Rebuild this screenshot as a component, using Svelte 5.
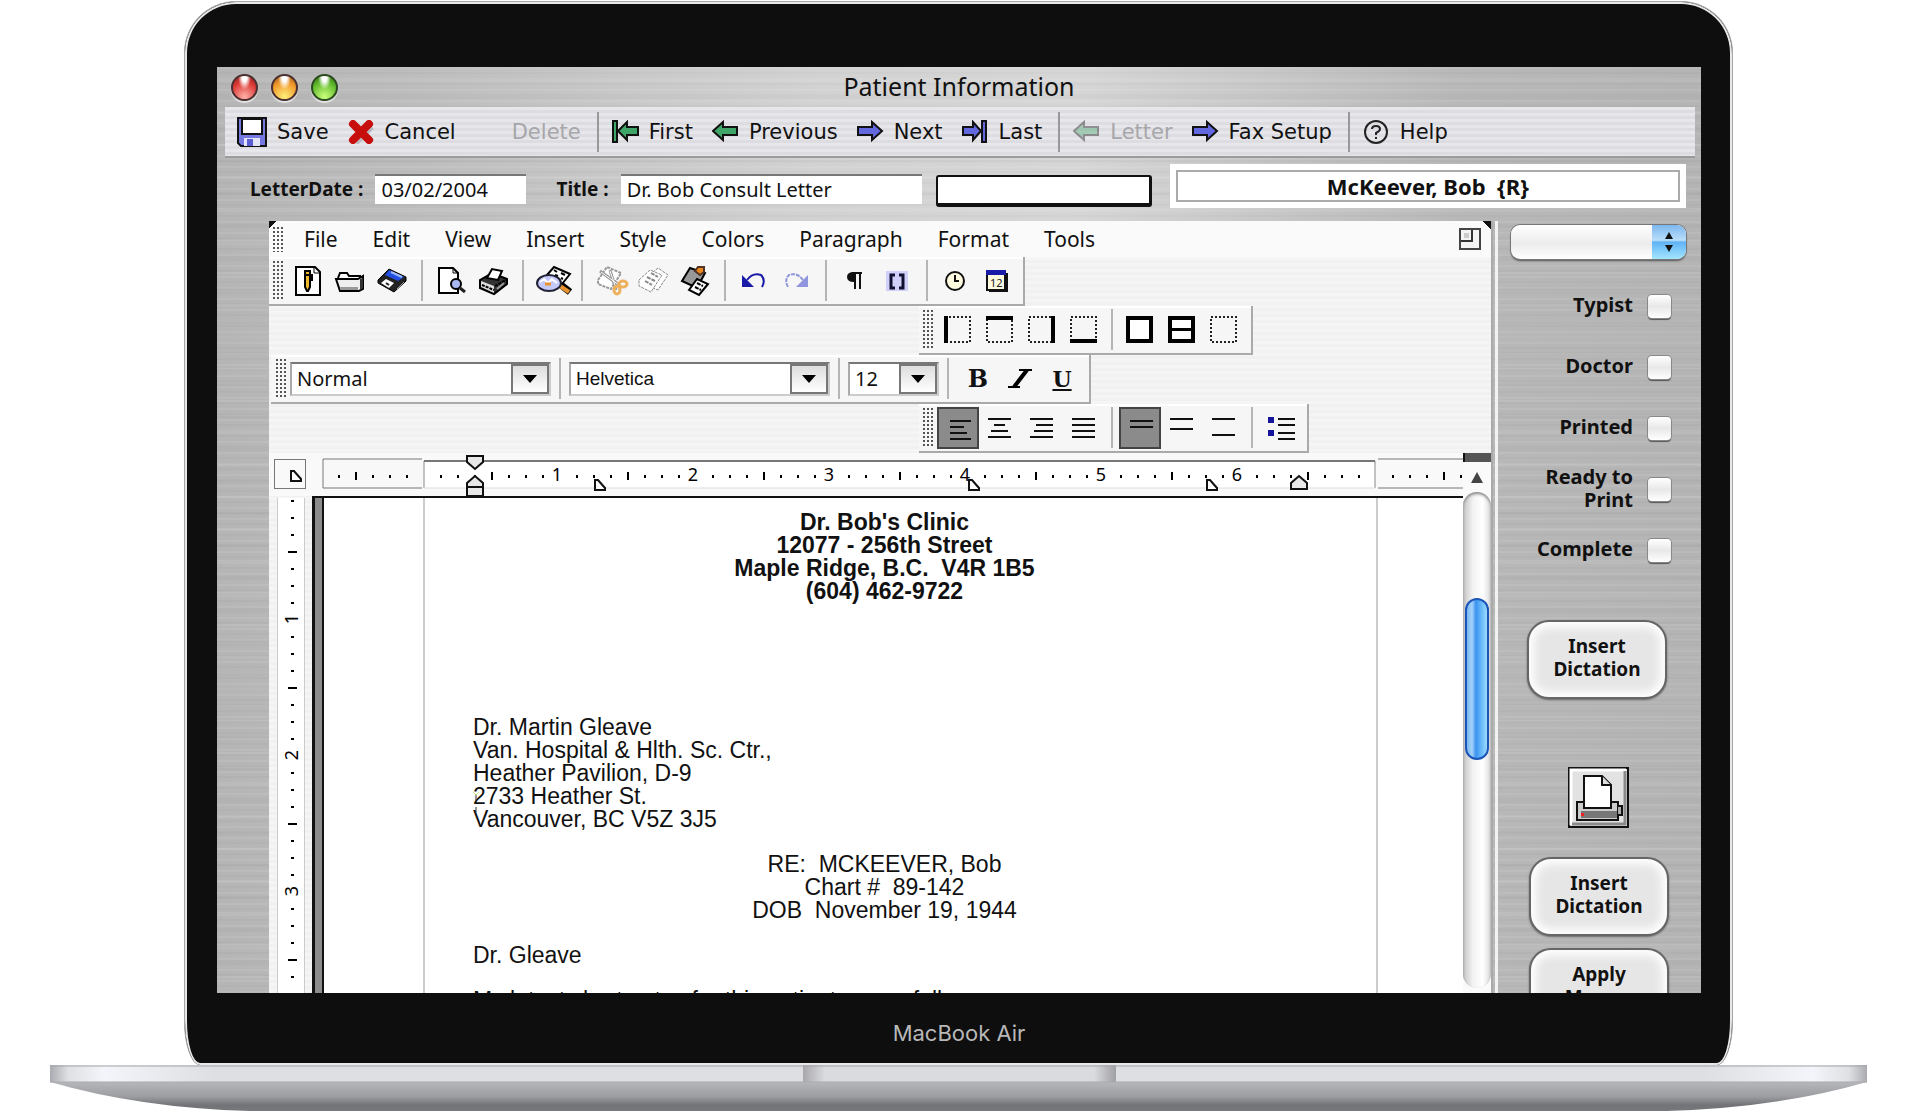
<script>
  const arrow = "M1 11 L11 2 V7 H25 V15 H11 V20 Z";
  const actions = [
    { name: "Save", icon: "save" },
    { name: "Cancel", icon: "cancel" },
    { name: "Delete", icon: "", disabled: true },
    { sep: true },
    { name: "First", icon: "first" },
    { name: "Previous", icon: "left" },
    { name: "Next", icon: "right" },
    { name: "Last", icon: "last" },
    { sep: true },
    { name: "Letter", icon: "left", disabled: true },
    { name: "Fax Setup", icon: "right" },
    { sep: true },
    { name: "Help", icon: "help" },
  ];
  const menus = ["File", "Edit", "View", "Insert", "Style", "Colors", "Paragraph", "Format", "Tools"];

  // "|" marks a separator between groups
  const fileTools = ["new", "open", "disk", "|", "preview", "print", "|", "find", "|", "cut", "copy", "paste", "|", "undo", "redo", "|", "pilcrow", "brackets", "|", "clock", "calendar"];
  const borderTools = ["edgeL", "edgeT", "edgeR", "edgeB", "|", "box", "boxH", "boxNone"];
  const alignTools = ["alignL", "alignC", "alignR", "alignJ", "|", "space1", "space15", "space2", "|", "list"];

  const dots = '<rect x="2" y="2" width="25" height="25" fill="none" stroke="#222" stroke-width="2" stroke-dasharray="2 2"/>';
  const bars = (rows) =>
    rows.map(([x, y, w]) => `<rect x="${x}" y="${y}" width="${w}" height="2" fill="#111"/>`).join("");

  const icons = {
    new: '<path d="M3 1H22L27 6V29H3Z" fill="#fff" stroke="#000" stroke-width="2"/><path d="M21 1V7H27" fill="none" stroke="#000"/><path d="M12 5H17V21L15 25H14L12 21Z" fill="#f0b92c" stroke="#000" stroke-width="2"/><path d="M12 9H19V15" fill="none" stroke="#000" stroke-width="2"/>',
    open: '<path d="M3 12L5 7H12L14 10H25V13" fill="#fff" stroke="#000" stroke-width="2"/><path d="M1 13H23L28 10V23L24 25H5Z" fill="#eee" stroke="#000" stroke-width="2"/><path d="M5 21H23V24H6Z" fill="#999"/><path d="M25 13V24L28 22V12Z" fill="#333"/>',
    disk: '<path d="M12 3L29 11V15L17 26L1 17V14Z" fill="#222" stroke="#000"/><path d="M12 4L27 11L21 15L8 9Z" fill="#244ee0"/><path d="M14 6L25 11" stroke="#9cbcff" stroke-width="2"/><path d="M9 13L17 17L12 22L4 17Z" fill="#fff"/><path d="M9 17L12 19" stroke="#222" stroke-width="2"/><path d="M20 23L27 16" stroke="#999"/>',
    preview: '<path d="M3 2H17L22 7V27H3Z" fill="#fff" stroke="#000" stroke-width="2"/><path d="M17 2V7H22" fill="none" stroke="#000"/><circle cx="20" cy="18" r="5" fill="#a9b8f5" stroke="#000" stroke-width="2"/><path d="M24 22L29 26" stroke="#222" stroke-width="3"/>',
    print: '<path d="M2 14L14 7L29 13V18L16 28L2 22Z" fill="#333" stroke="#000" stroke-width="2"/><path d="M9 12L14 3L24 5L20 14Z" fill="#fff" stroke="#000" stroke-width="2"/><path d="M3 15L16 20V27L3 21Z" fill="#ddd"/><path d="M4 19L16 24M17 20L28 14" stroke="#000" stroke-width="2" stroke-dasharray="3 1"/><path d="M19 23L26 17" stroke="#999" stroke-width="2"/>',
    find: '<path d="M10 9L17 1L33 8L25 18Z" fill="#fff" stroke="#000" stroke-width="2"/><path d="M17 4L20 6M24 7L28 9M18 9L21 10M24 12L26 13" stroke="#000" stroke-width="2"/><path d="M24 19L33 26" stroke="#000" stroke-width="7"/><path d="M23 20L32 26" stroke="#e8932d" stroke-width="4"/><ellipse cx="12" cy="17" rx="12" ry="8" fill="#c5c9fa" stroke="#223" stroke-width="2"/><path d="M3 16L7 13L11 17L15 13L20 17" fill="none" stroke="#fff" stroke-width="2"/><path d="M8 18H14" stroke="#e8932d" stroke-width="3"/>',
    cut: '<path d="M2 14L11 1L25 7L15 23L2 18Z" fill="#fff" stroke="#999" stroke-width="2" stroke-dasharray="3 1"/><path d="M4 5L24 20M14 4L20 24" stroke="#999" stroke-width="3"/><path d="M5 6L23 19M14 5L20 22" stroke="#fff"/><g fill="none" stroke="#edb15d" stroke-width="3"><ellipse cx="21" cy="24" rx="3" ry="4"/><ellipse cx="27" cy="18" rx="4" ry="3"/></g>',
    copy: '<g fill="#fff" stroke="#888" stroke-width="1" stroke-dasharray="3 1"><path d="M12 9L20 2L30 9L20 24L8 19Z"/><path d="M1 14L12 4L24 9L13 26L1 20Z"/></g><path d="M9 11L17 15M7 15L14 19M13 7L20 11" stroke="#888" stroke-width="2" stroke-dasharray="4 1"/>',
    paste: '<path d="M2 15L10 2L25 7L17 22Z" fill="#999" stroke="#000" stroke-width="2"/><path d="M15 5L18 1H24V6L20 9Z" fill="#e88a20" stroke="#532" stroke-width="2"/><path d="M9 24L17 13L28 18L19 29Z" fill="#fff" stroke="#000" stroke-width="2"/><path d="M17 17L23 20M15 21L21 24" stroke="#000" stroke-width="2" stroke-dasharray="4 1"/>',
    undo: '<path d="M8 14Q14 6 22 9Q27 14 23 21" fill="none" stroke="#1a1aa8" stroke-width="2"/><path d="M3 9V21H15Z" fill="#1a1aa8"/>',
    redo: '<path d="M22 14Q16 6 8 9Q3 14 7 21" fill="none" stroke="#8f96dd" stroke-width="2" stroke-dasharray="4 1"/><path d="M27 9V21H15Z" fill="#8f96dd"/>',
    pilcrow: '<path d="M22 7H12M15 7V23M20 7V23" fill="none" stroke="#111" stroke-width="2"/><path d="M14 6Q7 6 7 11Q7 16 14 16Z" fill="#111"/>',
    brackets: '<rect x="4" y="5" width="22" height="20" fill="#d0d0fb"/><path d="M13 9H9V22H13M17 9H21V22H17" fill="none" stroke="#101030" stroke-width="3"/>',
    clock: '<circle cx="14" cy="15" r="9" fill="#fffbe0" stroke="#111" stroke-width="2"/><path d="M14 9V15H18" fill="none" stroke="#111" stroke-width="2"/>',
    calendar: '<rect x="6" y="7" width="19" height="19" fill="#111"/><rect x="4" y="5" width="18" height="19" fill="#fffbe0" stroke="#111" stroke-width="2"/><rect x="3" y="4" width="20" height="5" fill="#1a1aa8"/><text x="7" y="21" font-size="11" font-family="Noto Sans, sans-serif" fill="#222">12</text>',
    edgeL: dots + '<rect x="1" y="1" width="4" height="27"/>',
    edgeT: dots + '<rect x="1" y="1" width="27" height="4"/>',
    edgeR: dots + '<rect x="24" y="1" width="4" height="27"/>',
    edgeB: dots + '<rect x="1" y="24" width="27" height="4"/>',
    box: '<rect x="3" y="3" width="23" height="23" fill="#fff" stroke="#000" stroke-width="4"/>',
    boxH: '<rect x="3" y="3" width="23" height="23" fill="#fff" stroke="#000" stroke-width="4"/><rect x="3" y="13" width="23" height="3"/>',
    boxNone: dots,
    alignL: bars([[7, 7, 21], [7, 13, 14], [7, 19, 17], [7, 25, 21]]),
    alignC: bars([[3, 5, 23], [9, 11, 11], [6, 17, 17], [3, 23, 23]]),
    alignR: bars([[3, 5, 23], [9, 11, 17], [7, 17, 19], [3, 23, 23]]),
    alignJ: bars([[3, 5, 23], [3, 11, 23], [3, 17, 23], [3, 23, 23]]),
    space1: bars([[5, 7, 23], [5, 13, 23]]),
    space15: bars([[3, 5, 23], [3, 15, 23]]),
    space2: bars([[3, 5, 23], [3, 21, 23]]),
    list: bars([[13, 5, 17], [13, 11, 17], [13, 19, 17], [13, 25, 17]]) + '<path d="M3 4H9V10H3ZM3 17H9V23H3Z" fill="#15159c"/>',
  };

  // ruler marks, one every 1/8 inch
  const marks = [];
  for (let i = -5; i <= 61; i++) marks.push(i);
  const onRuler = marks.filter((i) => i !== 0 && i !== 56);
  const vmarks = [];
  for (let i = 1; i <= 30; i++) vmarks.push(i);

  const flags = ["Typist", "Doctor", "Printed", "Ready to Print", "Complete"];

  let active = $state({ alignL: true, space1: true });
  let letterDate = $state("03/02/2004");
  let title = $state("Dr. Bob Consult Letter");
</script>

{#snippet tools(list)}
  {#each list as t}
    {#if t === "|"}
      <span class="sep"></span>
    {:else}
      <button class="tool" class:on={active[t]} aria-label={t}>
        <svg width="30" height="30" viewBox="0 0 30 30">{@html icons[t]}</svg>
      </button>
    {/if}
  {/each}
{/snippet}

{#snippet combo(id, value, cls)}
  <div class="combo {cls}">
    <select {id} aria-label={id}><option>{value}</option></select>
    <span class="drop"><svg width="16" height="9"><path d="M1 1H15L8 9Z" /></svg></span>
  </div>
{/snippet}

<div class="laptop">
  <div class="lid">
    <div class="screen">
      <header class="titlebar">
        <div class="lights">
          <span class="light red"></span>
          <span class="light amber"></span>
          <span class="light green"></span>
        </div>
        <h1>Patient Information</h1>
      </header>

      <nav class="actions">
        {#each actions as a}
          {#if a.sep}
            <span class="line"></span>
          {:else}
            <button disabled={a.disabled}>
              {#if a.icon === "save"}
                <svg width="30" height="30" viewBox="0 0 30 30"><path d="M1 1H29V29H4L1 26Z" fill="#7478e0" stroke="#111" stroke-width="2" /><rect x="5" y="2" width="20" height="15" fill="#fff" stroke="#111" stroke-width="2" /><rect x="7" y="21" width="16" height="8" fill="#e4e4f8" /><rect x="10" y="22" width="6" height="7" fill="#5a5ed0" /></svg>
              {:else}
                <svg width="27" height="24" viewBox="0 0 27 24">
                  {#if a.icon === "cancel"}
                    <path d="M5 4L21 20M21 4L5 20" stroke="#b9b9c0" stroke-width="8" transform="translate(2 2)" />
                    <path d="M5 4L21 20M21 4L5 20" stroke="#c80d0d" stroke-width="8" stroke-linecap="round" />
                  {:else if a.icon === "left"}
                    <path d={arrow} class="go-left" />
                  {:else if a.icon === "right"}
                    <path d={arrow} class="go-right" transform="matrix(-1 0 0 1 26 0)" />
                  {:else if a.icon === "first"}
                    <rect x="1" y="1" width="4" height="21" class="go-left" />
                    <path d="M6 11L15 2V7H26V15H15V20Z" class="go-left" />
                  {:else if a.icon === "last"}
                    <path d="M19 11L11 2V7H1V15H11V20Z" class="go-right" />
                    <rect x="20" y="1" width="4" height="21" class="go-right" />
                  {:else if a.icon === "help"}
                    <circle cx="13" cy="12" r="11" fill="none" stroke="#222" stroke-width="2" />
                    <path d="M9 9Q9 6 13 6Q17 6 17 9Q17 11 13 13V15M13 17V19" fill="none" stroke="#222" stroke-width="2" />
                  {/if}
                </svg>
              {/if}
              {a.name}
            </button>
          {/if}
        {/each}
      </nav>

      <form class="fields">
        <label for="date">LetterDate :</label>
        <input id="date" class="date" bind:value={letterDate} />
        <label for="title">Title :</label>
        <input id="title" class="title" bind:value={title} />
        <input class="blank" aria-label="Status" />
        <output class="patient">McKeever, Bob&nbsp; {"{R}"}</output>
      </form>

      <div class="work">
        <main class="editor">
          <div class="menubar">
            <span class="grip"></span>
            {#each menus as m}
              <button>{m}</button>
            {/each}
            <svg class="zoombox" width="22" height="22" viewBox="0 0 22 22"><rect x="1" y="1" width="20" height="20" fill="#f4f4f4" stroke="#444" stroke-width="2" /><path d="M2 13H13V2" fill="none" stroke="#333" stroke-width="2" /><rect x="5" y="5" width="5" height="5" fill="#ccc" /></svg>
            <span class="corner left"></span>
            <span class="corner right"></span>
          </div>

          <div class="bar main"><span class="grip"></span>{@render tools(fileTools)}</div>
          <div class="bar shifted"><span class="grip"></span>{@render tools(borderTools)}</div>
          <div class="bar format">
            <span class="grip"></span>
            {@render combo("Style", "Normal", "wide")}
            <span class="sep"></span>
            {@render combo("Font", "Helvetica", "wide font")}
            <span class="sep"></span>
            {@render combo("Size", "12", "small")}
            <span class="sep"></span>
            <button class="tool b">B</button>
            <button class="tool i" aria-label="Italic"><svg width="30" height="30" viewBox="0 0 30 30"><path d="M14 6H27M3 23H15" stroke="#000" stroke-width="2" /><path d="M22 6L9 23" stroke="#000" stroke-width="4" /></svg></button>
            <button class="tool u">U</button>
          </div>
          <div class="bar shifted"><span class="grip"></span>{@render tools(alignTools)}</div>

          <div class="lower">
            <div class="pane">
              <div class="ruler">
                <span class="tabbox"><svg width="12" height="12"><path d="M1 1V11H11V9L4 1Z" fill="#fff" stroke="#111" stroke-width="2" /></svg></span>
                <svg class="scale" height="44">
                  <path d="M100 6H1V35H100" fill="#f8f8f8" stroke="#777" />
                  <rect x="102" y="8" width="951" height="27" fill="#fff" />
                  <path d="M102 35V8H1053V35" fill="none" stroke="#888" />
                  <path d="M102 8H1053" stroke="#777" stroke-width="2" />
                  <path d="M102 35H1053" stroke="#ddd" />
                  <path d="M1056 6H1160M1056 35H1160" stroke="#777" />
                  {#each onRuler as i}
                    {#if i > 0 && i % 8 === 0}
                      <text x={99 + i * 17} y="28">{i / 8}</text>
                    {:else if i % 4 === 0}
                      <rect x={101 + i * 17} y="19" width="2" height="8" />
                    {:else}
                      <rect x={101 + i * 17} y="22" width="2" height="3" />
                    {/if}
                  {/each}
                  <g fill="#e8e8e8" stroke="#111" stroke-width="2">
                    <path d="M145 3H161V9L153 16L145 9Z" />
                    <path d="M145 43V30L153 23L161 30V43ZM145 34H161" />
                    <path d="M969 36V30L977 23L985 30V36Z" />
                    <path fill="#fff" d="M273 27V37H283V35L276 27ZM647 27V37H657V35L650 27ZM885 27V37H895V35L888 27Z" />
                  </g>
                </svg>
              </div>
              <div class="docrow">
                <svg class="vscale" width="28">
                  {#each vmarks as i}
                    {#if i % 8 === 0}
                      <text x="0" y="0" transform="translate(20 {i * 17 - 15}) rotate(-90)">{i / 8}</text>
                    {:else if i % 4 === 0}
                      <rect x="10" y={i * 17 - 15} width="9" height="2" />
                    {:else}
                      <rect x="13" y={i * 17 - 15} width="3" height="2" />
                    {/if}
                  {/each}
                </svg>
                <div class="gutter"></div>
                <article class="paper">
                  <p class="head">Dr. Bob's Clinic<br />12077 - 256th Street<br />Maple Ridge, B.C.&nbsp; V4R 1B5<br />(604) 462-9722</p>
                  <p>Dr. Martin Gleave<br />Van. Hospital &amp; Hlth. Sc. Ctr.,<br />Heather Pavilion, D-9<br />2733 Heather St.<br />Vancouver, BC V5Z 3J5</p>
                  <p class="mid">RE:&nbsp; MCKEEVER, Bob<br />Chart #&nbsp; 89-142<br />DOB&nbsp; November 19, 1944</p>
                  <p>Dr. Gleave</p>
                  <p>My latest chart notes for this patient are as follows:</p>
                  <svg class="caret" width="8" height="24"><path d="M1 2L4 5L7 2" fill="none" stroke="#cde08a" /><path d="M4 5V22" stroke="#333" stroke-dasharray="5 7 9 3" /></svg>
                </article>
              </div>
            </div>
            <div class="scroll">
              <span class="split"></span>
              <svg class="up" width="28" height="30"><path d="M14 10L20 21H8Z" fill="#444" /></svg>
              <div class="track"><span class="thumb"></span></div>
            </div>
          </div>
        </main>

        <aside class="side">
          <div class="popup">
            <select aria-label="Letter type"><option></option></select>
            <span><svg width="10" height="20"><path d="M5 0L9 7H1ZM5 20L9 13H1Z" fill="#111" /></svg></span>
          </div>
          {#each flags as f}
            <label class="flag"><span>{f}</span><input type="checkbox" /></label>
          {/each}
          <button class="gel first">Insert<br />Dictation</button>
          <button class="printer" aria-label="Print">
            <svg width="61" height="61" viewBox="0 0 61 61">
              <rect x="1" y="1" width="59" height="59" fill="#e2e2e2" stroke="#111" stroke-width="2" />
              <path d="M3 58V3H58" fill="none" stroke="#fff" stroke-width="3" /><path d="M4 57H57V4" fill="none" stroke="#8b8b8b" stroke-width="3" />
              <path d="M9 35H50V53H9Z" fill="#ccc" stroke="#111" stroke-width="2" />
              <rect x="13" y="44" width="36" height="7" fill="#777" /><path d="M50 39H54V48H50" fill="#aaa" stroke="#111" stroke-width="2" />
              <path d="M16 41V9H34L43 18V41Z" fill="#fff" stroke="#111" stroke-width="2" /><path d="M34 9V18H43" fill="#ddd" stroke="#111" stroke-width="2" />
              <rect x="13" y="46" width="3" height="3" fill="#e22" />
            </svg>
          </button>
          <button class="gel">Insert<br />Dictation</button>
          <button class="gel">Apply<br />Macros</button>
        </aside>
      </div>
    </div>
    <div class="chin">MacBook Air</div>
  </div>

  <svg class="base" viewBox="0 0 1817 46">
    <defs>
      <linearGradient id="strip"><stop offset="0" stop-color="#a9abb0" /><stop offset=".01" stop-color="#dfe0e4" /><stop offset=".03" stop-color="#f4f5fa" /><stop offset=".09" stop-color="#dedfe3" /><stop offset=".91" stop-color="#dedfe3" /><stop offset=".97" stop-color="#f4f5fa" /><stop offset=".99" stop-color="#dfe0e4" /><stop offset="1" stop-color="#a9abb0" /></linearGradient>
      <linearGradient id="belly" x2="0" y2="1"><stop offset="0" stop-color="#b6b7bb" /><stop offset=".5" stop-color="#9c9da1" /><stop offset=".8" stop-color="#727377" /><stop offset="1" stop-color="#77787c" /></linearGradient>
      <linearGradient id="notch"><stop offset="0" stop-color="#a8a8ac" /><stop offset=".07" stop-color="#dadbdf" /><stop offset=".93" stop-color="#dadbdf" /><stop offset="1" stop-color="#a0a0a4" /></linearGradient>
    </defs>
    <path d="M0 17Q90 43 200 46H1617Q1727 43 1817 17Z" fill="url(#belly)" />
    <rect width="1817" height="17" fill="url(#strip)" />
    <rect x="753" width="313" height="17" fill="url(#notch)" />
    <path d="M0 1H1817" stroke="#a4a5aa" />
    <path d="M0 17H1817" stroke="#a9aaae" />
  </svg>
</div>

<style>
  :global(body) {
    background: #fff;
  }
  .laptop {
    padding: 1px 64px 0 50px;
    font-family: "Noto Sans", "Lucida Grande", sans-serif;
    color: #111;
  }
  button, input, select {
    font: inherit;
    color: inherit;
    box-sizing: border-box;
    margin: 0;
    padding: 0;
    border: 0;
    background: none;
    appearance: none;
  }
  svg {
    display: block;
  }
  .lid {
    margin: 0 134px;
    padding: 65px 31px 0 32px;
    background: #0e0e0e;
    border: 1px solid #a5a5a8;
    border-bottom: 0;
    border-radius: 52px 52px 16px 16px / 52px 52px 44px 44px;
    box-shadow: inset 0 0 0 2px #e8e8ea;
  }
  .screen {
    aspect-ratio: 1484 / 926;
    overflow: hidden;
    display: flex;
    flex-direction: column;
    background:
      repeating-linear-gradient(rgba(255, 255, 255, 0.07) 0 2px, transparent 2px 5px, rgba(0, 0, 0, 0.02) 5px 7px, transparent 7px 11px),
      repeating-linear-gradient(transparent 0 13px, rgba(255, 255, 255, 0.08) 13px 15px, transparent 15px 29px, rgba(0, 0, 0, 0.02) 29px 32px),
      linear-gradient(90deg, #b5b5b5, #bcbcbc 12%, #d2d2d2 40%, #d6d6d6 58%, #b8b8b8 84%, #b4b4b4);
  }
  .titlebar {
    display: grid;
    grid-template-columns: 1fr auto 1fr;
    align-items: center;
    height: 40px;
    flex: none;
  }
  .lights {
    display: flex;
    gap: 13px;
    padding-left: 14px;
  }
  .light {
    width: 27px;
    height: 27px;
    box-sizing: border-box;
    border-radius: 50%;
    border: 2px solid #4a3030;
    box-shadow: 0 2px 1px rgba(255, 255, 255, 0.6);
  }
  .red {
    background: radial-gradient(ellipse at 50% 5%, #fff 0 15%, transparent 40%), radial-gradient(circle at 50% 90%, #ffb0a8, #dd3a36 60%, #8c1a1a);
  }
  .amber {
    background: radial-gradient(ellipse at 50% 5%, #fff 0 15%, transparent 40%), radial-gradient(circle at 50% 90%, #fff07a, #f19a2c 60%, #9c5010);
  }
  .green {
    border-color: #2b4a20;
    background: radial-gradient(ellipse at 50% 5%, #fff 0 15%, transparent 40%), radial-gradient(circle at 50% 90%, #ccff7e, #62bb2c 60%, #2a6a10);
  }
  h1 {
    margin: 0;
    font-size: 25px;
    font-weight: 400;
    line-height: 36px;
    padding-bottom: 2px;
  }

  .actions {
    display: flex;
    align-items: center;
    flex: none;
    height: 49px;
    margin: 0 6px 0 8px;
    padding-left: 12px;
    font-family: "DejaVu Sans", Verdana, sans-serif;
    font-size: 21px;
    background: repeating-linear-gradient(#e7e6ea 0 3px, #dddce1 3px 6px);
    box-shadow: 0 2px 0 #9b9b9b;
  }
  .actions button {
    display: flex;
    align-items: center;
    gap: 10px;
    margin-right: 19px;
  }
  .actions button:disabled {
    color: #a6a6aa;
  }
  .actions button:disabled svg {
    opacity: 0.4;
  }
  .go-left {
    fill: #3fa568;
    stroke: #111;
    stroke-width: 2;
  }
  .go-right {
    fill: #6468df;
    stroke: #111;
    stroke-width: 2;
  }
  .line {
    width: 2px;
    height: 40px;
    margin: 0 13px 0 -3px;
    background: #999;
  }

  .fields {
    display: flex;
    align-items: center;
    flex: none;
    height: 65px;
    padding: 0 15px 0 33px;
    font-size: 20px;
  }
  .fields label {
    font-size: 19px;
    font-weight: 700;
    margin-right: 12px;
  }
  .fields input {
    height: 30px;
    background: #fff;
    border-top: 2px solid #777;
    padding-left: 6px;
  }
  .fields .date {
    width: 151px;
    margin-right: 30px;
  }
  .fields .title {
    width: 301px;
  }
  .fields .blank {
    width: 216px;
    height: 32px;
    margin: 4px 18px 0 14px;
    border: 2px solid #111;
    border-width: 2px 3px 4px 2px;
    border-radius: 3px;
  }
  .patient {
    flex: 1;
    align-self: flex-start;
    margin-top: 8px;
    background: #fff;
    border: 5px solid #fff;
    outline: 2px solid #aaa;
    outline-offset: -8px;
    height: 34px;
    line-height: 34px;
    text-align: center;
    font-size: 22px;
    font-weight: 700;
  }

  .work {
    flex: 1;
    min-height: 0;
    display: flex;
    padding-left: 52px;
  }
  .editor {
    flex: 1;
    min-width: 0;
    display: flex;
    flex-direction: column;
    background: repeating-linear-gradient(#f5f5f5 0 3px, #f1f1f1 3px 6px);
    border-right: 2px solid #aaa;
    position: relative;
  }
  .menubar {
    display: flex;
    align-items: center;
    gap: 35px;
    height: 36px;
    flex: none;
    font-size: 21px;
    background: #fafafa;
    padding: 0 10px 0 3px;
    border-radius: 10px 10px 0 0;
  }
  .menubar .grip {
    height: 26px;
    margin-right: -14px;
  }
  .zoombox {
    margin-left: auto;
  }
  .corner {
    position: absolute;
    top: 0;
    width: 8px;
    height: 8px;
  }
  .corner.left {
    left: 0;
    background: linear-gradient(135deg, #111 50%, transparent 50%);
  }
  .corner.right {
    right: 0;
    background: linear-gradient(225deg, #111 50%, transparent 50%);
  }
  .grip {
    width: 11px;
    height: 41px;
    background:
      radial-gradient(circle, #555 1px, transparent 1px) 0 0 / 4px 4px;
  }
  .bar {
    display: flex;
    align-items: center;
    align-self: flex-start;
    flex: none;
    box-sizing: border-box;
    height: 49px;
    padding: 0 6px 0 3px;
    background: #f6f6f6;
    border: solid #aaa;
    border-width: 0 2px 2px 0;
    box-shadow: inset 0 2px 0 #fff;
  }
  .bar.main {
    padding-right: 4px;
  }
  .bar .grip {
    margin-right: 4px;
  }
  .bar.shifted {
    margin-left: 650px;
  }
  .bar.format {
    margin-left: 2px;
    padding-left: 4px;
  }
  .tool {
    display: grid;
    place-items: center;
    width: 42px;
    height: 42px;
  }
  .tool svg {
    overflow: visible;
  }
  .tool.on {
    background: #8b8b8b;
    border: 2px solid #444;
  }
  .b, .u {
    font: 700 24px "DejaVu Serif", serif;
  }
  .u {
    font-size: 22px;
    text-decoration: underline;
  }
  .sep {
    width: 14px;
    height: 41px;
    background: linear-gradient(#b5b5b5, #b5b5b5) center / 2px 100% no-repeat;
  }
  .main .sep {
    width: 17px;
  }
  .format .sep {
    width: 18px;
  }
  .combo {
    display: grid;
    grid-template-columns: 1fr 38px;
    height: 34px;
    box-sizing: border-box;
    background: #fff;
    border: 2px solid #ccc;
    border-top-color: #777;
    border-left-color: #aaa;
    font-size: 20px;
  }
  .combo.wide {
    width: 261px;
  }
  .combo.small {
    width: 91px;
  }
  .combo.font {
    font-family: "Liberation Sans", Helvetica, sans-serif;
    font-size: 19px;
  }
  .combo select {
    grid-area: 1 / 1 / 2 / 3;
    padding-left: 5px;
  }
  .drop {
    grid-area: 1 / 2;
    display: grid;
    place-items: center;
    pointer-events: none;
    border: 2px solid #777;
    background: linear-gradient(#ddd, #fff);
  }

  .lower {
    flex: 1;
    min-height: 0;
    display: flex;
  }
  .pane {
    flex: 1;
    min-width: 0;
    display: flex;
    flex-direction: column;
  }
  .ruler {
    display: flex;
    height: 43px;
    flex: none;
    padding-left: 5px;
    background: #f9f9f9;
  }
  .tabbox {
    display: grid;
    place-items: center;
    box-sizing: border-box;
    width: 32px;
    height: 30px;
    margin: 6px 16px 0 0;
    border: 1px solid #777;
    padding: 4px 0 0 11px;
  }
  .scale {
    flex: 1;
    min-width: 0;
  }
  .scale text, .vscale text {
    font-size: 18px;
    text-anchor: middle;
  }
  .docrow {
    flex: 1;
    min-height: 0;
    display: flex;
  }
  .vscale {
    box-sizing: border-box;
    height: 100%;
    margin: 2px 7px 0 8px;
    background: #fff;
    border: solid #ccc;
    border-width: 0 1px;
  }
  .gutter {
    width: 7px;
    background: #8c8c8c;
    border: solid #111;
    border-width: 2px 2px 0 3px;
  }
  .paper {
    flex: 1;
    position: relative;
    overflow: hidden;
    padding: 13px 88px 0 149px;
    border-top: 2px solid #111;
    background: linear-gradient(#ccc, #ccc) 99px 0 / 2px 100% no-repeat, linear-gradient(#ccc, #ccc) right 85px top / 2px 100% no-repeat, #fff;
    font: 23px/23px "Liberation Sans", Helvetica, sans-serif;
  }
  .paper p {
    margin: 0 0 22px;
    white-space: nowrap;
  }
  .paper .head {
    font-weight: 700;
    margin-bottom: 113px;
  }
  .paper .head, .paper .mid {
    text-align: center;
    padding-right: 79px;
  }
  .caret {
    position: absolute;
    left: 148px;
    top: 292px;
  }
  .scroll {
    width: 28px;
    display: flex;
    flex-direction: column;
    background: #fafafa;
  }
  .split {
    height: 9px;
    background: #555;
    border-left: 2px solid #111;
  }
  .track {
    flex: 1;
    margin-bottom: 5px;
    padding: 106px 2px 0;
    border-radius: 14px;
    background: linear-gradient(90deg, #c4c4c4, #f2f2f2 35%, #fff 70%, #dcdcdc);
    box-shadow: inset 0 2px 3px #888;
  }
  .thumb {
    display: block;
    height: 162px;
    box-sizing: border-box;
    border-radius: 12px;
    border: 2px solid #1c55b8;
    background: linear-gradient(90deg, #7ab8f2, #a4d2fb 25%, #3a92ee 45%, #5cb0f8 65%, #9adcff);
  }

  .side {
    width: 206px;
    box-sizing: border-box;
    margin-left: 2px;
    border-left: 3px solid #f2f2f2;
    padding: 4px 15px 0 0;
    display: flex;
    flex-direction: column;
    align-items: flex-end;
    font-size: 19px;
    font-weight: 700;
    line-height: 23px;
  }
  .popup {
    display: grid;
    grid-template-columns: 1fr 34px;
    width: 175px;
    height: 34px;
    flex: none;
    margin-bottom: 17px;
    border-radius: 9px;
    overflow: hidden;
    background: linear-gradient(#fff, #ececec 55%, #fff);
    box-shadow: 0 0 0 1px #777, 0 2px 2px #555;
  }
  .popup select {
    grid-area: 1 / 1 / 2 / 3;
  }
  .popup span {
    grid-area: 1 / 2;
    display: grid;
    place-items: center;
    pointer-events: none;
    background: linear-gradient(#7db7ee, #b8defa 45%, #5fb2f5 50%, #a4e6ff);
  }
  .flag {
    display: flex;
    align-items: center;
    justify-content: flex-end;
    flex: none;
    height: 61px;
    gap: 15px;
    padding-right: 15px;
    text-align: right;
    font-size: 20px;
  }
  .flag span {
    max-width: 110px;
    padding-bottom: 4px;
  }
  .flag input {
    width: 23px;
    height: 23px;
    border-radius: 4px;
    background: linear-gradient(#fff, #e8e8e8 50%, #fff);
    box-shadow: 0 0 0 1px #888, 0 2px 1px #555;
  }
  .gel {
    width: 140px;
    height: 79px;
    flex: none;
    margin: 0 17px 12px 0;
    padding-bottom: 4px;
    border: 2px solid #666;
    border-radius: 22px;
    background: #e6e6e6;
    box-shadow: inset 0 0 10px 5px #fff, 0 1px 2px #666;
  }
  .gel.first {
    margin: 39px 19px 68px 0;
  }
  .printer {
    flex: none;
    margin: 0 57px 29px 0;
  }
  .chin {
    height: 72px;
    line-height: 80px;
    text-align: center;
    font-family: Inter, Roboto, sans-serif;
    font-size: 22px;
    color: #b8b8b8;
  }
  .base {
    width: 100%;
  }
</style>
